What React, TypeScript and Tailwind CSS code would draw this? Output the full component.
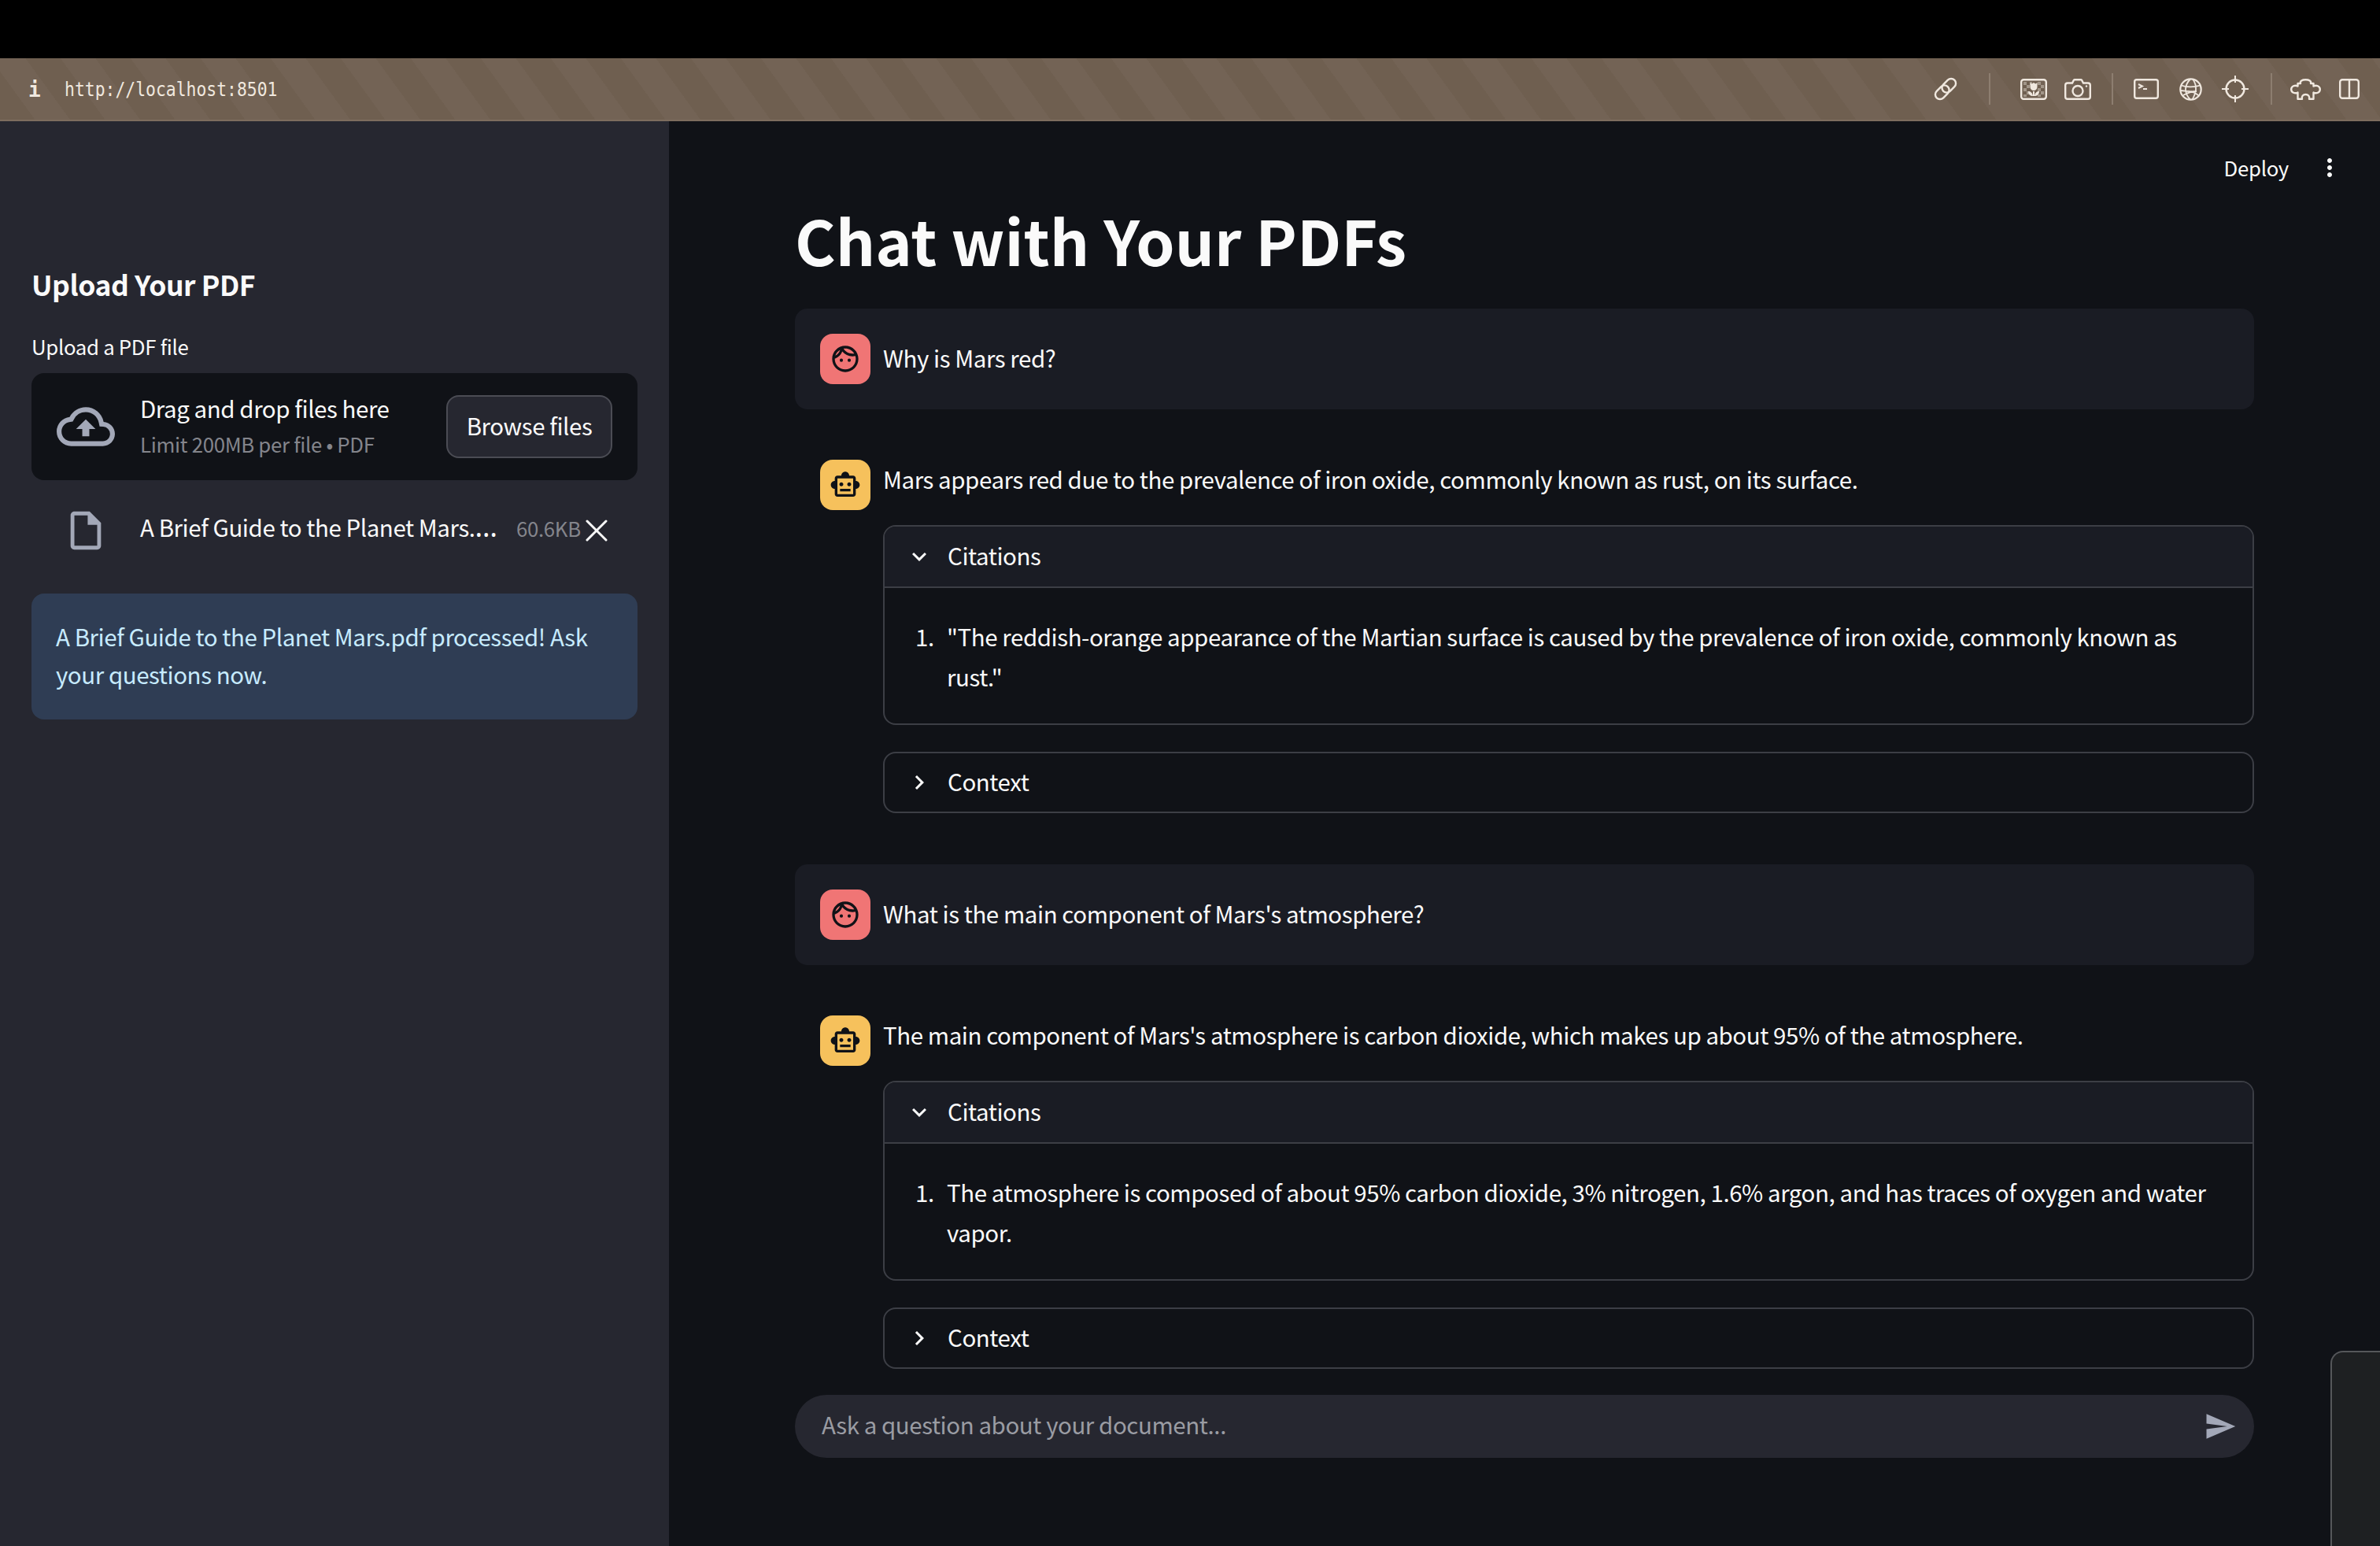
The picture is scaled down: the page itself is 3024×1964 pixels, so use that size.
import { X } from "lucide-react";
import {
  MdChevronRight,
  MdExpandMore,
  MdMoreVert,
  MdOutlineCloudUpload,
  MdOutlineFace,
  MdOutlineInsertDriveFile,
  MdOutlineSmartToy,
  MdSend,
} from "react-icons/md";

const sans = "[font-family:'Noto_Sans_CJK_JP','Noto_Sans',sans-serif]";

const Separator = ({ className }: { className: string }) => (
  <div className={`h-[40px] w-[2px] bg-[#8d7e70] ${className}`} />
);

const ToolbarIcons = () => (
  <div className="flex items-center text-[#f0e8df]">
    <svg width="30" height="30" viewBox="0 0 30 30" fill="none" stroke="currentColor" strokeWidth="2.4" className="overflow-visible">
      <g transform="rotate(-45 15 15)">
        <rect x="-1" y="9" width="20" height="12" rx="6" />
        <rect x="11" y="9" width="20" height="12" rx="6" />
      </g>
    </svg>
    <Separator className="ml-[40px]" />
    <svg className="ml-[38px]" width="34" height="27" viewBox="0 0 34 27" fill="none">
      <rect x="1.2" y="1.2" width="31.6" height="24.6" rx="3" stroke="currentColor" strokeWidth="2.4" />
      <g fill="currentColor" opacity="0.4">
        <rect x="4" y="4" width="4" height="4" />
        <rect x="12" y="4" width="3" height="4" />
        <rect x="22" y="4" width="4" height="4" />
        <rect x="26" y="8" width="4" height="4" />
        <rect x="8" y="8" width="4" height="4" />
        <rect x="4" y="12" width="4" height="4" />
        <rect x="22" y="12" width="4" height="4" />
        <rect x="8" y="16" width="4" height="4" />
        <rect x="26" y="16" width="4" height="4" />
        <rect x="4" y="20" width="4" height="3" />
        <rect x="22" y="20" width="4" height="3" />
      </g>
      <path d="M12.5 5l2.2 1.6L17 5l2.300 1.600L21.500 5v5.500a4.500 4.500 0 0 1-9 0zM16 16v6h2v-6zM10 16c3 0 5.500 1.800 6 6-3 0-6-2-6-6zM24 16c-3 0-5.500 1.800-6 6 3 0 6-2 6-6z" fill="currentColor" />
    </svg>
    <svg className="ml-[22px]" width="34" height="27" viewBox="0 0 34 27" fill="none" stroke="currentColor" strokeWidth="2.400">
      <path d="M4 5.500h6l2-3.800c.3-.4.600-.5 1-.5h8c.4 0 .7.100 1 .5l2 3.800h6c1.600 0 2.800 1.200 2.800 2.800V23c0 1.600-1.200 2.800-2.800 2.800H4c-1.600 0-2.800-1.200-2.800-2.800V8.300C1.200 6.700 2.400 5.500 4 5.500z" />
      <circle cx="17" cy="15.500" r="6.500" />
      <circle cx="28" cy="9.500" r="1.200" fill="currentColor" stroke="none" />
    </svg>
    <Separator className="ml-[26px]" />
    <svg className="ml-[26px]" width="32" height="26" viewBox="0 0 32 26" fill="none" stroke="currentColor" strokeWidth="2.400">
      <rect x="1.200" y="1.200" width="29.600" height="23.600" rx="2.500" />
      <path d="M6 7l5 2.500L6 12M12 13h5" strokeWidth="2" />
    </svg>
    <svg className="ml-[26px]" width="29" height="29" viewBox="0 0 29 29" fill="none" stroke="currentColor" strokeWidth="1.800">
      <circle cx="14.500" cy="14.500" r="13.200" strokeWidth="2.200" />
      <path d="M14 1.500c-4 4-6 8-6 13s2 9 6 13M17 1.500c3 4 4.500 8 4 13.500-.3 4-2 8-4.500 12.500M2.500 9.500c6 2.500 17 2.500 24 0M1.500 16c6 1 13 0 18 3s5 3.500 6 4M5 22c5-3 11-5 17-5" />
    </svg>
    <svg className="ml-[25px]" width="34" height="34" viewBox="0 0 34 34" fill="none" stroke="currentColor" strokeWidth="2.400">
      <circle cx="17" cy="17" r="11.500" />
      <path d="M17 0v9M17 25v9M0 17h9M25 17h9" strokeWidth="2" />
    </svg>
    <Separator className="ml-[28px]" />
    <svg className="ml-[23px]" width="39" height="27" viewBox="0 0 39 27" fill="none" stroke="currentColor" strokeWidth="2.400" strokeLinejoin="round">
      <path d="M13 6C12 3 15 1.200 19.500 1.200S27 3 26 6h3.500v3.500c3.500-2 8.300 0 8.300 4s-4.800 6-8.300 4v8.300h-5.500c1-3.500-1.500-5.800-4.500-5.800s-5.500 2.300-4.500 5.800H9.500v-8.300c-3.500 2-8.300 0-8.300-4s4.800-6 8.300-4V6z" />
    </svg>
    <svg className="ml-[23px] mr-[26px]" width="26" height="26" viewBox="0 0 26 26" fill="none" stroke="currentColor" strokeWidth="2.400">
      <rect x="1.200" y="1.200" width="23.600" height="23.600" rx="3" />
      <path d="M13 1v24" />
    </svg>
  </div>
);

const Avatar = ({ kind }: { kind: "user" | "assistant" }) => (
  <div
    className={`flex h-[64px] w-[64px] shrink-0 items-center justify-center rounded-[16px] text-[#101217] ${
      kind === "user" ? "bg-[#f07575]" : "bg-[#f6c15c]"
    }`}
  >
    {kind === "user" ? <MdOutlineFace size={40} /> : <MdOutlineSmartToy size={40} />}
  </div>
);

const UserMessage = ({ text }: { text: string }) => (
  <div className="flex h-[128px] gap-[16px] rounded-[16px] bg-[#1a1c24] p-[32px]">
    <Avatar kind="user" />
    <p className="h-[51px] text-[29.5px] leading-[61px] tracking-[-0.44px] text-[#fafafa]">{text}</p>
  </div>
);

const AssistantMessage = ({ answer, citation }: { answer: string; citation: string }) => (
  <div className="flex gap-[16px] pb-[33px] pl-[32px] pt-[32px]">
    <Avatar kind="assistant" />
    <div className="min-w-0 flex-1">
      <p className="h-[51px] text-[29.5px] leading-[48px] tracking-[-0.44px] text-[#fafafa]">{answer}</p>
      <div className="mt-[32px] rounded-[16px] border-2 border-[#3c3e45]">
        <div className="flex h-[78px] items-center gap-[18px] rounded-t-[14px] border-b-2 border-[#3c3e45] bg-[#1a1c24] pl-[26px]">
          <MdExpandMore size={36} className="text-[#fafafa]" />
          <span className="pb-[4px] text-[29.5px] tracking-[-0.44px] text-[#fafafa]">Citations</span>
        </div>
        <div className="flex px-[39px] pb-[34px] pt-[36px] text-[29.5px] leading-[51px] tracking-[-0.44px] text-[#fafafa]">
          <span className="w-[40px] shrink-0">1.</span>
          <p>{citation}</p>
        </div>
      </div>
      <div className="mt-[34px] flex h-[78px] items-center gap-[18px] rounded-[16px] border-2 border-[#3c3e45] pl-[26px]">
        <MdChevronRight size={36} className="text-[#fafafa]" />
        <span className="pb-[3px] text-[29.5px] tracking-[-0.44px] text-[#fafafa]">Context</span>
      </div>
    </div>
  </div>
);

export default function App() {
  return (
    <div className={`relative flex h-[1964px] w-[3024px] flex-col overflow-hidden bg-[#101217] ${sans}`}>
      <div className="h-[74px] shrink-0 bg-black" />
      <div className="flex h-[80px] shrink-0 items-center justify-between border-b-2 border-[#7d6d5e] bg-[repeating-linear-gradient(54deg,#6f5f50_0_36px,#736355_36px_72px)]">
        <div className="flex items-center pt-[2px]">
          <span className="ml-[36px] w-[46px] font-['DejaVu_Sans_Mono',monospace] text-[26px] font-bold text-[#f0e8df]">i</span>
          <span className="inline-block scale-y-[1.12] font-['DejaVu_Sans_Mono',monospace] text-[21.4px] text-[#f0e8df]">http://localhost:8501</span>
        </div>
        <ToolbarIcons />
      </div>

      <div className="flex min-h-0 flex-1">
        <aside className="w-[850px] shrink-0 bg-[#262730] px-[40px] pt-[180px]">
          <h3 className="text-[35.5px] font-bold leading-[54px] tracking-[-0.45px] text-[#fafafa]">Upload Your PDF</h3>
          <div className="mt-[33px] text-[25.8px] leading-[38px] tracking-[-0.32px] text-[#fafafa]">Upload a PDF file</div>
          <div className="mt-[15px] flex h-[136px] items-center rounded-[16px] bg-[#101217] pl-[32px] pr-[32px]">
            <MdOutlineCloudUpload size={74} className="shrink-0 text-[#a3a8b8]" />
            <div className="ml-[32px] flex-1">
              <div className="text-[29.5px] leading-[44px] tracking-[-0.44px] text-[#fafafa]">Drag and drop files here</div>
              <div className="text-[25.8px] leading-[48px] tracking-[-0.32px] text-[#84858c]">Limit 200MB per file • PDF</div>
            </div>
            <button className="h-[80px] w-[211px] rounded-[16px] border-2 border-[#4b4c54] bg-[#262730] pb-[3px] text-[29.5px] tracking-[-0.44px] text-[#fafafa]">
              Browse files
            </button>
          </div>
          <div className="mt-[30px] flex h-[68px] items-center pl-[40px]">
            <MdOutlineInsertDriveFile size={58} className="shrink-0 text-[#a3a8b8]" />
            <div className="ml-[40px] w-[458px] whitespace-nowrap pb-[10px] text-[29.5px] leading-[44px] tracking-[-0.44px] text-[#fafafa]">
              A Brief Guide to the Planet Mars.<span className="font-['Noto_Sans'] text-[36px]">…</span>
            </div>
            <span className="ml-[20px] w-[82px] pb-[6px] text-[25.8px] tracking-[-0.32px] text-[#84858c]">60.6KB</span>
            <X size={48} strokeWidth={1.5} className="-ml-[4px] shrink-0 text-[#fafafa]" />
          </div>
          <div className="mt-[46px] h-[160px] rounded-[16px] bg-[#2f3d54] px-[31px] pb-[34px] pt-[30px] text-[29.5px] leading-[48px] tracking-[-0.44px] text-[#c7ebff]">
            A Brief Guide to the Planet Mars.pdf processed! Ask your questions now.
          </div>
        </aside>

        <main className="min-w-0 flex-1">
          <div className="flex h-[118px] items-center justify-end gap-[34px] pr-[46px] text-[#fafafa]">
            <span className="text-[25.8px] tracking-[-0.32px]">Deploy</span>
            <MdMoreVert size={36} />
          </div>
          <div className="mx-[160px]">
            <h1 className="h-[68px] text-[78.9px] font-bold leading-[64px] text-[#fafafa]">Chat with Your PDFs</h1>
            <div className="mt-[52px] flex flex-col gap-[32px]">
              <UserMessage text="Why is Mars red?" />
              <AssistantMessage
                answer="Mars appears red due to the prevalence of iron oxide, commonly known as rust, on its surface."
                citation={'"The reddish-orange appearance of the Martian surface is caused by the prevalence of iron oxide, commonly known as rust."'}
              />
              <UserMessage text="What is the main component of Mars's atmosphere?" />
              <AssistantMessage
                answer="The main component of Mars's atmosphere is carbon dioxide, which makes up about 95% of the atmosphere."
                citation="The atmosphere is composed of about 95% carbon dioxide, 3% nitrogen, 1.6% argon, and has traces of oxygen and water vapor."
              />
            </div>
            <div className="flex h-[80px] items-center justify-between rounded-[40px] bg-[#262730] pl-[34px] pr-[22px]">
              <span className="pb-[5px] text-[29.5px] tracking-[-0.44px] text-[#9a9ca3]">Ask a question about your document...</span>
              <MdSend size={42} className="text-[#a3a8b8]" />
            </div>
          </div>
        </main>
      </div>

      <div className="absolute bottom-0 right-0 h-[248px] w-[63px] rounded-tl-[16px] border-l-2 border-t-2 border-[#55575a] bg-[#1e2022]" />
    </div>
  );
}
